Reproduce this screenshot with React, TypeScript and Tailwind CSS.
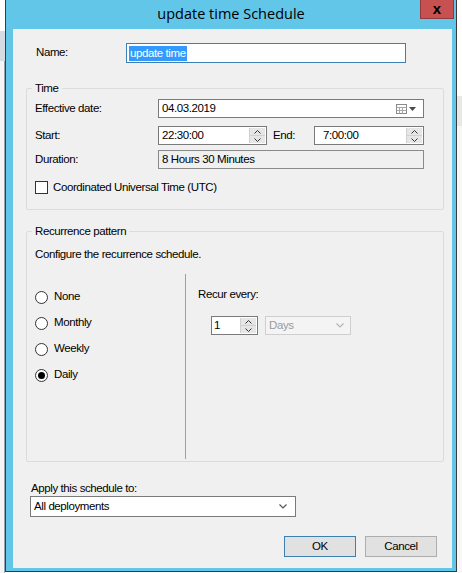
import { ReactNode } from 'react';

const font = { fontFamily: '"Liberation Sans", Arial, sans-serif' };

function Spinner() {
  return (
    <div className="flex flex-col w-[16px] h-full border-l border-[#d0d0d0]">
      <div className="flex-1 flex items-center justify-center bg-[#e6e6e6] border-b border-[#d0d0d0]">
        <svg width="7" height="4" viewBox="0 0 7 4"><path d="M0.5 3.5 L3.5 0.5 L6.5 3.5" fill="none" stroke="#333" strokeWidth="1" /></svg>
      </div>
      <div className="flex-1 flex items-center justify-center bg-[#e6e6e6]">
        <svg width="7" height="4" viewBox="0 0 7 4"><path d="M0.5 0.5 L3.5 3.5 L6.5 0.5" fill="none" stroke="#333" strokeWidth="1" /></svg>
      </div>
    </div>
  );
}

function TextBox({ value, width, spin, pad = 'pl-[3px]' }: { value: string; width: string; spin?: boolean; pad?: string }) {
  return (
    <div className={`${width} h-[19px] flex bg-white border border-[#7a7a7a]`}>
      <div className={`flex-1 flex items-center ${pad} text-[11.5px] text-black`}>{value}</div>
      {spin && <div className="p-px h-full"><Spinner /></div>}
    </div>
  );
}

function Group({ title, className, children }: { title: string; className: string; children: ReactNode }) {
  return (
    <div className={`relative border border-[#dcdcdc] rounded-[2px] ${className}`}>
      <span className="absolute -top-[8px] left-[5px] px-[3px] bg-[#f0f0f0] text-[11.5px] leading-[14px] text-black">{title}</span>
      {children}
    </div>
  );
}

function Radio({ label, checked }: { label: string; checked?: boolean }) {
  return (
    <div className="flex items-center h-[14px]">
      <div className="w-[13px] h-[13px] rounded-full border border-[#333] bg-white flex items-center justify-center">
        {checked && <div className="w-[7px] h-[7px] rounded-full bg-black" />}
      </div>
      <span className="ml-[6px] text-[11.5px] text-black">{label}</span>
    </div>
  );
}

export default function App() {
  return (
    <div className="w-[462px] h-[573px] flex bg-white overflow-hidden tracking-[-0.4px]" style={font}>
      <div className="w-[5px] h-full flex flex-col bg-white">
        <div className="h-[31px]" />
        <div className="h-[30px] bg-[#d5dbe2]" />
        <div className="flex-1 bg-[#f5f5f5] border-r border-[#9aa3ad]" />
      </div>

      <div className="w-[452px] h-[572px] flex flex-col bg-[#62c6e9] border-x border-b border-[#3b3b3b]">
        <div className="relative h-[29px] flex items-center justify-center">
          <span className="text-[14.5px] text-black -mt-[2px] tracking-normal" style={{ fontFamily: '"Open Sans", "Noto Sans", sans-serif' }}>update time Schedule</span>
          <div className="absolute top-0 right-[2px] w-[34px] h-[19px] bg-[#c75050] border border-[#8f3b3b] border-t-0 flex items-center justify-center">
            <span className="text-[15px] font-bold leading-[15px] text-black tracking-normal pb-[2px]">x</span>
          </div>
        </div>

        <div className="ml-[7px] mr-[4px] h-[539px] bg-[#f0f0f0] flex flex-col">
          <div className="mt-[14px] flex items-center h-[20px]">
            <span className="ml-[23px] w-[90px] text-[11.5px] text-black">Name:</span>
            <div className="w-[280px] h-[20px] flex items-center bg-white border border-[#3c7fb1] pl-[2px]">
              <span className="bg-[#3399ff] text-white text-[11.5px] leading-[15px] px-[1px]">update time</span>
            </div>
          </div>

          <Group title="Time" className="mt-[25px] ml-[13px] w-[418px] h-[122px]">
            <div className="flex items-center mt-[10px]">
              <span className="ml-[8px] w-[123px] text-[11.5px]">Effective date:</span>
              <div className="w-[266px] h-[19px] flex items-center bg-white border border-[#7a7a7a]">
                <span className="flex-1 pl-[3px] text-[11.5px]">04.03.2019</span>
                <svg width="22" height="10" viewBox="0 0 22 10" className="mr-[5px]">
                  <rect x="0.5" y="0.5" width="10" height="9" fill="#fff" stroke="#8a8a8a" />
                  <path d="M0.5 3.5 H10.5 M0.5 6.5 H10.5 M3.5 3 V9.5 M6.5 3 V9.5" stroke="#a8a8a8" />
                  <path d="M13 3 L20 3 L16.5 7 Z" fill="#4a4a4a" />
                </svg>
              </div>
            </div>
            <div className="flex items-center mt-[8px]">
              <span className="ml-[8px] w-[123px] text-[11.5px]">Start:</span>
              <TextBox value="22:30:00" width="w-[109px]" spin />
              <span className="ml-[6px] w-[41px] text-[11.5px]">End:</span>
              <TextBox value="7:00:00" width="w-[110px]" spin pad="pl-[8px]" />
            </div>
            <div className="flex items-center mt-[5px]">
              <span className="ml-[8px] w-[123px] text-[11.5px]">Duration:</span>
              <div className="w-[266px] h-[19px] flex items-center bg-[#f0f0f0] border border-[#8a8a8a] pl-[3px] text-[11.5px]">8 Hours 30 Minutes</div>
            </div>
            <div className="flex items-center mt-[10px] ml-[8px]">
              <div className="w-[13px] h-[13px] bg-white border border-[#333]" />
              <span className="ml-[5px] text-[11.5px]">Coordinated Universal Time (UTC)</span>
            </div>
          </Group>

          <Group title="Recurrence pattern" className="mt-[21px] ml-[13px] w-[418px] h-[231px] flex flex-col">
            <span className="mt-[15px] ml-[8px] text-[11.5px] leading-[14px]">Configure the recurrence schedule.</span>
            <div className="mt-[13px] flex h-[185px]">
              <div className="w-[159px] border-r border-[#a0a0a0] pl-[8px] pt-[16px] flex flex-col gap-[12px]">
                <Radio label="None" />
                <Radio label="Monthly" />
                <Radio label="Weekly" />
                <Radio label="Daily" checked />
              </div>
              <div className="flex flex-col pl-[12px] pt-[13px]">
                <span className="text-[11.5px] leading-[14px]">Recur every:</span>
                <div className="flex items-center mt-[15px] ml-[13px]">
                  <TextBox value="1" width="w-[47px]" spin pad="pl-[2px]" />
                  <div className="ml-[7px] w-[86px] h-[19px] flex items-center justify-between bg-[#f4f4f4] border border-[#cfcfcf] pl-[3px] pr-[6px]">
                    <span className="text-[11.5px] text-[#9a9a9a]">Days</span>
                    <svg width="8" height="5" viewBox="0 0 8 5"><path d="M0.5 0.5 L4 4 L7.5 0.5" fill="none" stroke="#b5b5b5" strokeWidth="1.2" /></svg>
                  </div>
                </div>
              </div>
            </div>
          </Group>

          <span className="mt-[19px] ml-[18px] text-[11.5px] leading-[14px]">Apply this schedule to:</span>
          <div className="mt-[1px] ml-[17px] w-[266px] h-[21px] flex items-center justify-between bg-white border border-[#7a7a7a] pl-[3px] pr-[8px]">
            <span className="text-[11.5px]">All deployments</span>
            <svg width="8" height="5" viewBox="0 0 8 5"><path d="M0.5 0.5 L4 4 L7.5 0.5" fill="none" stroke="#555" strokeWidth="1.2" /></svg>
          </div>

          <div className="mt-[19px] mr-[15px] flex justify-end gap-[9px]">
            <button className="w-[72px] h-[21px] bg-[#e1e1e1] border border-[#3c7fb1] text-[11.5px] text-black">OK</button>
            <button className="w-[72px] h-[21px] bg-[#e1e1e1] border border-[#adadad] text-[11.5px] text-black">Cancel</button>
          </div>
        </div>
      </div>

      <div className="flex-1 h-full flex flex-col bg-white">
        <div className="h-[96px]" />
        <div className="h-[30px] bg-[#e8e8e8]" />
        <div className="flex-1 bg-[#f7f7f7]" />
      </div>
    </div>
  );
}
